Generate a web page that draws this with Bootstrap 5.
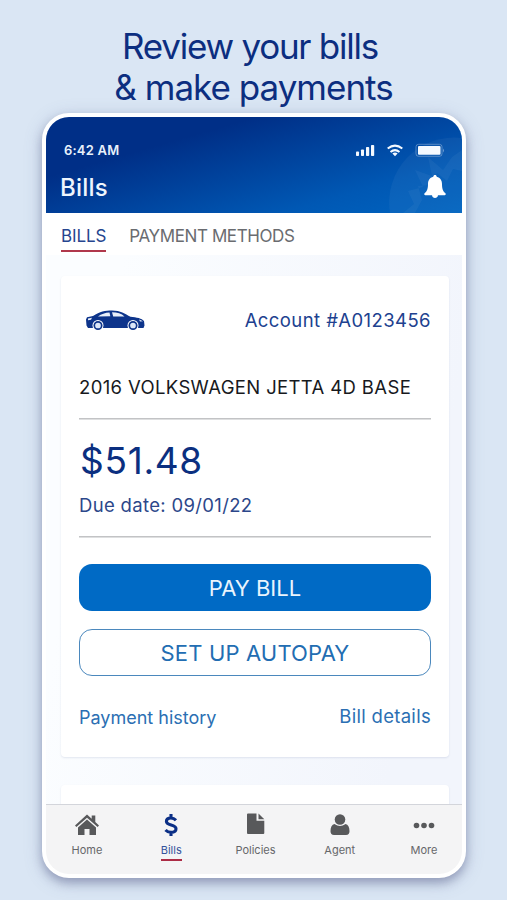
<!DOCTYPE html>
<html lang="en">
<head>
<meta charset="utf-8">
<meta name="viewport" content="width=device-width, initial-scale=1">
<title>Bills</title>
<link href="https://cdn.jsdelivr.net/npm/bootstrap@5.3.0/dist/css/bootstrap.min.css" rel="stylesheet">
<style>
body{font-family:Inter,"Liberation Sans",sans-serif;background:#dae6f4;height:900px;overflow:hidden;color:#0b2f86}
.promo{padding-top:26px;height:113px;font-size:35px;line-height:41px;font-weight:400;letter-spacing:-1.25px;color:#0c2e80;margin:0}
.promo span{display:block;white-space:nowrap}
.promo span:first-child{padding-right:7px}
.promo span:last-child{letter-spacing:-1px}
.phone{width:424px;height:765px;margin-left:42px;border:4px solid #fff;border-radius:27px;background:#fff;box-shadow:0 5px 10px rgba(70,75,120,.36),0 4px 18px rgba(90,100,150,.26)}
.screen{border-radius:23px;overflow:hidden}
.app-head{height:96px;background:linear-gradient(164deg,#002f87 28%,#0058b4 76%,#0064c0 100%)}
.burst{right:0;bottom:0}
.status{height:32px;margin-top:17px;padding:0 18px;font-size:13px;font-weight:600;line-height:33px;letter-spacing:.2px;color:#e8f1fb}
.head-title{font-size:24px;line-height:36px;height:36px;font-weight:500;padding:0 15px 0 14px;color:#eef5fd;letter-spacing:.2px}
.head-title svg{margin-bottom:2px}
.tabs{height:42px;padding-left:15px;font-size:17px;gap:23px;background:#fff}
.tabs a{height:39px;padding-top:4px;line-height:38px;text-decoration:none;color:#6a6c70;white-space:nowrap;letter-spacing:-.4px}
.tabs a.on{color:#26458f;position:relative;letter-spacing:-.1px}
.tabs a.on::after{content:"";position:absolute;left:0;right:0;top:37px;height:2px;background:#b0384c}
.feed{background:linear-gradient(100deg,#fbfdff 15%,#f2f5fc 85%);padding:21px 13px 0 15px}
.bill{border:0;border-radius:4px;background:#fff;box-shadow:0 1px 2px rgba(50,70,130,.12);padding:0 18px}
.bill-main{height:481px}
.bill-next{height:40px;margin-top:28px}
.acct{height:89px;font-size:18.5px;letter-spacing:.42px;color:#20418f}
.acct svg{margin-left:6px}
.vehicle{height:53px;line-height:45px;font-size:18.5px;letter-spacing:.36px;color:#17191d;white-space:nowrap}
.rule{height:2px;border-top:1px solid #c2c3c5;background:#dedfe0}
.amount{font-size:37px;line-height:42px;margin:20px 0 0 1px;color:#0b2f80;letter-spacing:.7px}
.due{font-size:18.5px;line-height:30px;letter-spacing:.33px;margin:8px 0 16px;color:#2c478a}
.btn-bill{height:47px;border-radius:13px;font-size:22px;line-height:1;padding:0;white-space:nowrap}
.btn-pay{background:#006ac5;color:#e9f4fd;border:0;margin-top:26px}
.btn-auto{background:#fff;color:#226db2;border:1.5px solid #4b88bd;margin-top:18px;letter-spacing:.15px}
.links{font-size:18px;margin-top:26px;line-height:32px}
.links a{color:#2b6fb3;text-decoration:none}
.links a:last-child{font-size:18.5px;letter-spacing:.3px;line-height:28px}
.tabbar{height:70px;background:#f4f4f5;border-top:1px solid #d3d5db;padding:0 6px 0 9px;font-size:11px}
.tabbar a{width:64px;text-decoration:none;color:#66676a;padding-top:6px}
.tabbar svg{display:block;height:28px;width:30px}
.tabbar span{line-height:18px;margin-top:1.5px}
.tabbar a.on span{color:#35539c;border-bottom:2px solid #ac2c46;line-height:18px;height:20px}
</style>
</head>
<body>
<h1 class="promo text-center"><span>Review your bills</span><span>&amp; make payments</span></h1>
<main class="phone">
<div class="screen d-flex flex-column h-100">
  <header class="app-head position-relative overflow-hidden flex-shrink-0">
    <svg class="burst position-absolute" width="74" height="80" viewBox="0 0 74 80" fill="#fff"><path opacity=".045" d="M2 80A65 65 0 0 1 74 5v75z"/><path opacity=".045" d="M15 80l11-9-6-13 15-4-8-17 17 6-4-19 15 13 9-13 10-7v21l-9-2-6 12-10-8-5 12-14 1 4 14-7 13z"/></svg>
    <div class="status d-flex justify-content-between align-items-center position-relative"><span>6:42 AM</span>
      <svg width="88" height="16" viewBox="356 142 88 16" fill="#f4f9ff"><rect x="356" y="151.500" width="3" height="4.500" rx=".8"/><rect x="361" y="149.500" width="3" height="6.500" rx=".8"/><rect x="366" y="147" width="3.200" height="9" rx=".8"/><rect x="371" y="145" width="3.200" height="11" rx=".8"/><g fill="none" stroke="#f4f9ff" stroke-width="2"><path d="M387.700 148.600q7.300-6 14.600 0"/><path d="M390.500 152q4.500-3.800 9 0"/></g><path d="M392.400 153.600q2.600-2 5.200 0L395 156.200z"/><rect x="416" y="144.300" width="26" height="12" rx="2.500" fill="none" stroke="#fff" stroke-opacity=".3"/><rect x="418" y="146" width="22.500" height="8.800" rx="1"/><path d="M443 148.500q1.500 2 0 4z" opacity=".5"/></svg>
    </div>
    <div class="head-title d-flex justify-content-between align-items-center position-relative mt-1"><span>Bills</span>
      <svg width="24" height="26" viewBox="0 0 24 26" fill="#fff"><path d="M12 1c1 0 1.600.7 1.700 1.700C17.400 3.600 19 6.600 19 10c0 5 1 7.300 3.400 9.200.7.600.3 2-.7 2H15c-.2 1.700-1.500 2.800-3 2.800s-2.800-1.100-3-2.800H2.300c-1 0-1.400-1.400-.7-2C4 17.300 5 15 5 10c0-3.400 1.600-6.400 5.300-7.300C10.400 1.700 11 1 12 1z"/></svg>
    </div>
  </header>
  <nav class="tabs d-flex flex-shrink-0"><a class="on" href="#">BILLS</a><a href="#">PAYMENT METHODS</a></nav>
  <section class="feed flex-fill overflow-hidden">
    <article class="card bill bill-main">
      <div class="acct d-flex justify-content-between align-items-center">
        <svg width="61" height="24" viewBox="0 0 61 24"><path fill="#0d348b" d="M1 10.500l1-2.300 6-1.200C15 2.600 20 1.500 27 1.500c8.500 0 13 3.500 18.500 6.200 6 .5 11.500 1.700 13.500 4.300l.5 4.500-1 2.500H3l-1.500-2.500z"/><path fill="#e8effa" d="M13 7.500q5-3.700 11.500-4l.8 3.700zM27 3.300q8 0 12.500 4.200H28.200zM3 9.500l4-.8-1 2-3 .6zM54 10.500l4 1.800-3 .3z"/><circle cx="13" cy="16.500" r="5.500" fill="#fff"/><circle cx="48" cy="16.500" r="5.500" fill="#fff"/><g fill="#dce7f8" stroke="#0d348b" stroke-width="1.700"><circle cx="13" cy="16.500" r="3.700"/><circle cx="48" cy="16.500" r="3.700"/></g></svg>
        <span>Account #A0123456</span>
      </div>
      <div class="vehicle">2016 VOLKSWAGEN JETTA 4D BASE</div>
      <div class="rule"></div>
      <div class="amount">$51.48</div>
      <div class="due">Due date: 09/01/22</div>
      <div class="rule"></div>
      <button class="btn btn-bill btn-pay w-100">PAY BILL</button>
      <button class="btn btn-bill btn-auto w-100">SET UP AUTOPAY</button>
      <div class="links d-flex justify-content-between"><a href="#">Payment history</a><a href="#">Bill details</a></div>
    </article>
    <article class="card bill bill-next"></article>
  </section>
  <nav class="tabbar d-flex justify-content-between flex-shrink-0">
    <a class="d-flex flex-column align-items-center" href="#"><svg viewBox="0 0 30 28" fill="#58595b"><path d="M3 14.500L15 3.600l4.700 4.200V4.500h3.600v6.500l3.700 3.500-1.400 1.500L15 6.800 4.400 16z"/><path d="M6 16.500l9-7.900 9 7.900V24h-6.500v-6h-5v6H6z"/></svg><span>Home</span></a>
    <a class="on d-flex flex-column align-items-center" href="#"><svg viewBox="0 0 30 28" fill="none" stroke="#0b2f86" stroke-width="3.100"><path d="M20 9.200C18.500 7.600 16.800 7 14.800 7c-2.700 0-4.400 1.200-4.400 3.200 0 5 9.600 2.400 9.600 7.600 0 2.300-2 3.600-4.800 3.600-2.200 0-4.200-.8-5.700-2.400M15 3v4M15 21v4"/></svg><span>Bills</span></a>
    <a class="d-flex flex-column align-items-center" href="#"><svg viewBox="0 0 30 28" fill="#58595b"><path d="M7 2.500h8.500v7.200h7.800v12.300q0 1-1 1H7q-1 0-1-1V3.500q0-1 1-1z"/><path d="M17.500 2.500l5.800 5.700h-5.800z"/></svg><span>Policies</span></a>
    <a class="d-flex flex-column align-items-center" href="#"><svg viewBox="0 0 30 28" fill="#58595b"><circle cx="15" cy="8.500" r="5.300"/><path d="M9.500 13q5.500 3.800 11 0c2.600.5 4 3 4 7.300q0 3.700-3.500 3.700H9q-3.500 0-3.500-3.700c0-4.300 1.400-6.800 4-7.300z"/></svg><span>Agent</span></a>
    <a class="d-flex flex-column align-items-center" href="#"><svg viewBox="0 0 30 28" fill="#58595b"><circle cx="7.500" cy="14.500" r="2.800"/><circle cx="15" cy="14.500" r="2.800"/><circle cx="22.500" cy="14.500" r="2.800"/></svg><span>More</span></a>
  </nav>
</div>
</main>
<script src="https://cdn.jsdelivr.net/npm/bootstrap@5.3.0/dist/js/bootstrap.bundle.min.js"></script>
</body>
</html>
